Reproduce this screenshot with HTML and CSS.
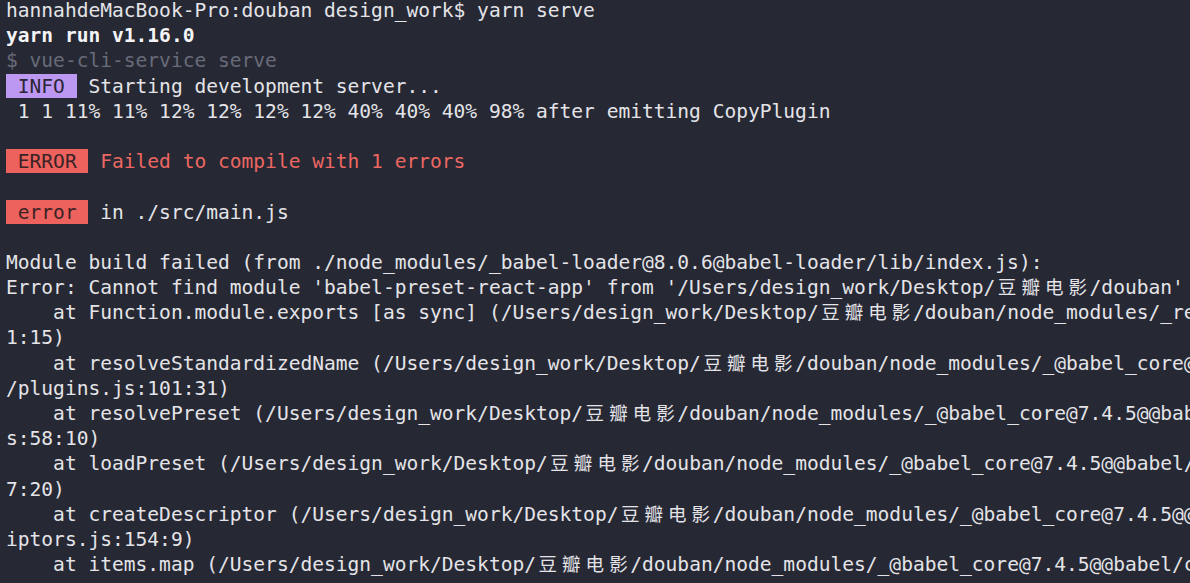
FILE: index.html
```html
<!DOCTYPE html>
<html lang="en">
<head>
    <meta charset="UTF-8">
    <meta name="viewport" content="width=device-width, initial-scale=1.0">
    <title>Terminal - yarn serve</title>
    <link rel="stylesheet" href="styles.css">
</head>
<body>
    <div class="window">
<pre class="terminal">hannahdeMacBook-Pro:douban design_work$ yarn serve
<b class="bold">yarn run v1.16.0</b>
<span class="dim">$ vue-cli-service serve</span>
<span class="badge info"> INFO </span> Starting development server...
 1 1 11% 11% 12% 12% 12% 12% 40% 40% 40% 98% after emitting CopyPlugin

<span class="badge err"> ERROR </span> <span class="red">Failed to compile with 1 errors</span>

<span class="badge err"> error </span> in ./src/main.js

Module build failed (from ./node_modules/_babel-loader@8.0.6@babel-loader/lib/index.js):
Error: Cannot find module 'babel-preset-react-app' from '/Users/design_work/Desktop/<span class="cjk">豆瓣电影</span>/douban'
    at Function.module.exports [as sync] (/Users/design_work/Desktop/<span class="cjk">豆瓣电影</span>/douban/node_modules/_resolve@1.1
1:15)
    at resolveStandardizedName (/Users/design_work/Desktop/<span class="cjk">豆瓣电影</span>/douban/node_modules/_@babel_core@7.4.5@@babel/core/lib/config/files
/plugins.js:101:31)
    at resolvePreset (/Users/design_work/Desktop/<span class="cjk">豆瓣电影</span>/douban/node_modules/_@babel_core@7.4.5@@babel/core/lib/config/files/plugins.j
s:58:10)
    at loadPreset (/Users/design_work/Desktop/<span class="cjk">豆瓣电影</span>/douban/node_modules/_@babel_core@7.4.5@@babel/core/lib/config/files/plugins.js:6
7:20)
    at createDescriptor (/Users/design_work/Desktop/<span class="cjk">豆瓣电影</span>/douban/node_modules/_@babel_core@7.4.5@@babel/core/lib/config/config-descr
iptors.js:154:9)
    at items.map (/Users/design_work/Desktop/<span class="cjk">豆瓣电影</span>/douban/node_modules/_@babel_core@7.4.5@@babel/core/lib/config/config-descriptors.js</pre>
    </div>
</body>
</html>
```

FILE: styles.css
```css
html, body {
    margin: 0;
    height: 100%;
    background-color: #262834;
    overflow: hidden;
}
.window {
    height: 100%;
    overflow: hidden;
}
.terminal {
    margin: -2px 0 0;
    padding: 0 0 0 6px;
    font-family: "DejaVu Sans Mono", "Liberation Mono", monospace;
    font-size: 19.57px;
    line-height: 25.18px;
    color: #e4e4e8;
    white-space: pre;
}
.bold {
    font-weight: bold;
    color: #f4f4f6;
}
.dim {
    color: #686b79;
}
.red {
    color: #ec6761;
}
.badge {
    padding-top: 1px;
    color: #2b2634;
}
.info {
    background-color: #bc98f3;
}
.err {
    background-color: #ee625d;
    color: #3a2226;
}
.cjk {
    font-family: "Noto Sans CJK SC", sans-serif;
    font-size: 18.5px;
    line-height: 1;
    letter-spacing: 5.06px;
    margin-left: 2.5px;
    margin-right: -2.5px;
}
```
